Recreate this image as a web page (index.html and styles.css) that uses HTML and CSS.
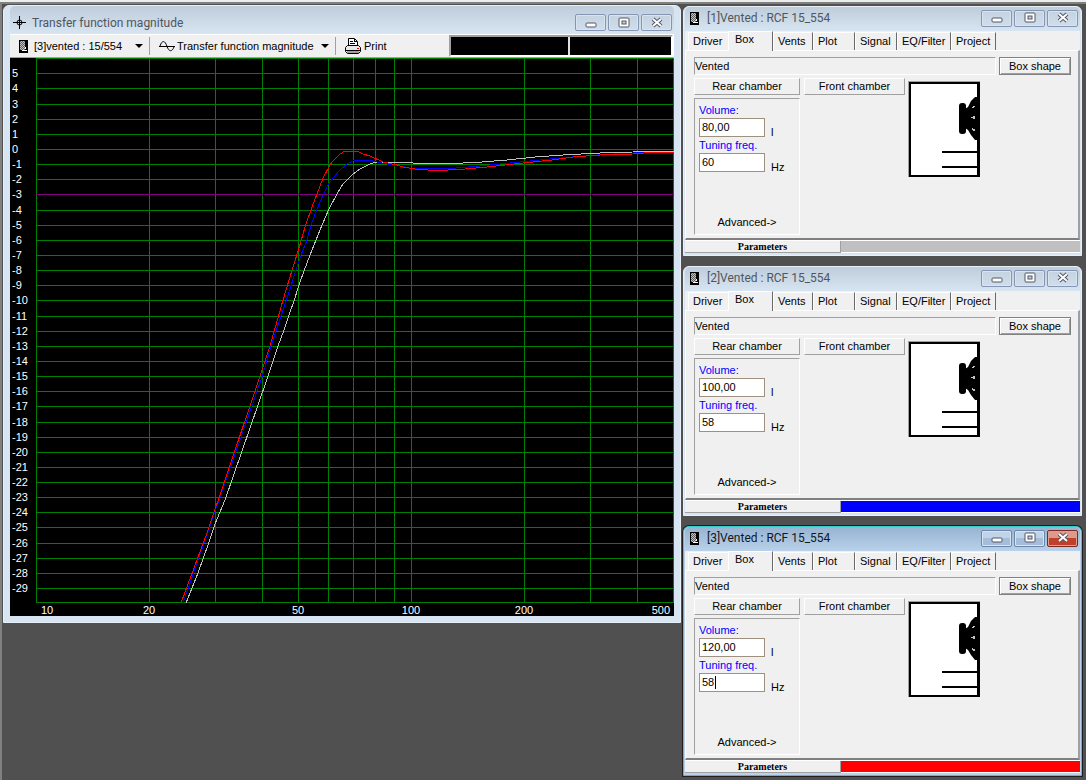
FILE: index.html
```
<!DOCTYPE html>
<html lang="en">
<head>
  <meta charset="UTF-8">
  <title>Transfer function magnitude</title>
  <link rel="stylesheet" href="styles.css">
</head>
<body>

  <!-- Shared icons -->
  <svg class="defs" width="0" height="0">
    <defs>
      <pattern id="dither" width="2" height="2" patternUnits="userSpaceOnUse">
        <rect width="2" height="2" fill="#c0c0c0"/>
        <rect width="1" height="1" fill="#606060"/>
        <rect x="1" y="1" width="1" height="1" fill="#606060"/>
      </pattern>
      <symbol id="icon-box" viewBox="0 0 9 13">
        <rect width="9" height="13" fill="#000"/>
        <rect x="1" y="1" width="5" height="9" fill="url(#dither)"/>
        <path d="M6 7h1v2h-1zM3 10h5v1h-5z" fill="#fff"/>
      </symbol>
      <symbol id="icon-min" viewBox="0 0 12 12">
        <rect x="1" y="6" width="10" height="4" rx="1" fill="#fff" stroke="#535666"/>
      </symbol>
      <symbol id="icon-max" viewBox="0 0 12 12">
        <rect x="1" y="1" width="10" height="9" rx="1" fill="#fff" stroke="#535666"/>
        <rect x="4" y="4" width="4" height="3" fill="#c3d0de" stroke="#535666"/>
      </symbol>
      <symbol id="icon-close" viewBox="0 0 12 12">
        <path d="M2 2L10 9M10 2L2 9" stroke="#535666" stroke-width="4"/>
        <path d="M2 2L10 9M10 2L2 9" stroke="#fff" stroke-width="2"/>
      </symbol>
      <symbol id="box-drawing" viewBox="0 0 72 96">
        <rect width="72" height="96" fill="#a0a0a0"/>
        <rect x="1" y="1" width="71" height="95" fill="#000"/>
        <rect x="3" y="3" width="66" height="91" fill="#fff"/>
        <path d="M34 70h36v2h-36zM34 85h36v2h-36z"/>
        <rect x="51" y="22" width="7" height="31" rx="3"/>
        <path d="M57 28L60 26L63 20L67 16H70V59H67L63 54L60 49L57 47z"/>
        <path d="M65 25h2v1h-1v1h-2v-1h1zM63 36h2v-1h2v3h-2v-1h-2zM64 47h1v1h2v2h-2v-1h-1z" fill="#c0c0c0"/>
      </symbol>
    </defs>
  </svg>

  <div class="app-edge"></div>

  <main class="desktop">

    <!-- Graph window -->
    <section class="window graph-window">
      <header class="titlebar">
        <svg class="title-icon" width="13" height="13" viewBox="0 0 13 13">
          <path d="M6 0h1v13h-1zM0 6h13v1H0z"/>
          <circle cx="6.5" cy="6.5" r="2.5" fill="none" stroke="#000"/>
        </svg>
        <h1>Transfer function magnitude</h1>
        <div class="win-buttons">
          <button aria-label="Minimize"><svg width="12" height="12"><use href="#icon-min"/></svg></button>
          <button aria-label="Maximize"><svg width="12" height="12"><use href="#icon-max"/></svg></button>
          <button aria-label="Close"><svg width="12" height="12"><use href="#icon-close"/></svg></button>
        </div>
      </header>

      <div class="toolbar">
        <label class="drop drop-project">
          <svg width="9" height="13"><use href="#icon-box"/></svg>
          <select aria-label="Project"><option>[3]vented : 15/554</option></select>
          <i class="arrow"></i>
        </label>
        <label class="drop drop-plot">
          <svg width="17" height="13" viewBox="0 0 17 13">
            <path d="M0 6.5H16M1 6C3 0 6 0 8 6.5C10 12 13 12 15 7" fill="none" stroke="#000"/>
          </svg>
          <select aria-label="Plot type"><option>Transfer function magnitude</option></select>
          <i class="arrow"></i>
        </label>
        <button class="print">
          <svg width="16" height="16" viewBox="0 0 16 16">
            <path d="M3.5 8.5V.5H9.500L12.500 3.500V8.500z" fill="#fff" stroke="#000"/>
            <path d="M5 3h3v1H5zM5 5h5v1H5zM9 1h1v2h2v1H9z"/>
            <path d="M.5 9.500L2.500 7.500H13.500L15.500 9.500V13.500L13.500 15.500H2.500L.5 13.500z" fill="#e8e8e8" stroke="#000"/>
            <path d="M1 12.500H15" stroke="#000"/>
            <path d="M2 13h12v2H2z" fill="#a0a0a0"/>
            <rect x="12" y="10" width="2" height="1" fill="red"/>
          </svg>
          Print
        </button>
        <div class="readout"><span></span><span></span></div>
      </div>

      <svg class="chart" viewBox="10 58 664 558">
        <g id="grid"></g>
        <g class="curves">
          <polyline class="c1" points="186,603 192,588 198,573 203,559 209,542 215,524 220,512 225,500 267,379 273,361 278,346 284,330 289,315 294,301 299,285 304,271 310,255 316,240 322,225 329,209 337,194 343,184 352,175 360,169 370,164 376,162 410,162 413,163 463,163 482,162 507,160 535,157 563,155 600,153 633,152 656,151 674,151"/>
          <polyline class="c2" points="183,603 214,514 262,377 267,360 272,343 282,313 287,298 297,267 301,255 307,240 311,225 317,209 324,193 328,185 334,177 340,170 347,164 353,161 357,160 368,160 377,162 387,164 400,166 410,168 456,168 480,166 500,164 520,162 550,159 583,156 613,154 655,152 674,152"/>
          <polyline class="c3" points="181,603 207,533 214,512 219,498 259,379 270,346 283,300 293,267 299,248 305,227 312,207 317,194 323,178 330,165 333,161 340,154 345,151 357,151 363,154 370,156 383,162 397,165 403,167 415,169 428,170 448,170 465,169 487,167 505,165 523,163 552,160 573,157 600,155 633,154 655,152 674,152"/>
        </g>
      </svg>
    </section>

    <!-- Project windows -->
    <div class="projects">

      <section class="window project">
        <header class="titlebar">
          <svg class="title-icon" width="9" height="13"><use href="#icon-box"/></svg>
          <h2>[1]Vented : RCF 15_554</h2>
          <div class="win-buttons">
            <button aria-label="Minimize"><svg width="12" height="12"><use href="#icon-min"/></svg></button>
            <button aria-label="Maximize"><svg width="12" height="12"><use href="#icon-max"/></svg></button>
            <button aria-label="Close"><svg width="12" height="12"><use href="#icon-close"/></svg></button>
          </div>
        </header>
        <nav class="tabs">
          <button>Driver</button>
          <button class="active">Box</button>
          <button>Vents</button>
          <button>Plot</button>
          <button>Signal</button>
          <button>EQ/Filter</button>
          <button>Project</button>
        </nav>
        <div class="panel">
          <div class="type-row">
            <div class="box-type">Vented</div>
            <button class="shape">Box shape</button>
          </div>
          <div class="box-row">
            <div class="chambers">
              <button class="rear">Rear chamber</button>
              <button class="front">Front chamber</button>
              <div class="values">
                <label for="vol1">Volume:</label>
                <div class="value"><input id="vol1" type="text" value="80,00"><span>l</span></div>
                <label for="freq1">Tuning freq.</label>
                <div class="value"><input id="freq1" type="text" value="60"><span>Hz</span></div>
                <button class="advanced">Advanced-&gt;</button>
              </div>
            </div>
            <svg class="drawing" width="72" height="96"><use href="#box-drawing"/></svg>
          </div>
        </div>
        <footer class="status"><button>Parameters</button><div class="color grey"></div></footer>
      </section>

      <section class="window project">
        <header class="titlebar">
          <svg class="title-icon" width="9" height="13"><use href="#icon-box"/></svg>
          <h2>[2]Vented : RCF 15_554</h2>
          <div class="win-buttons">
            <button aria-label="Minimize"><svg width="12" height="12"><use href="#icon-min"/></svg></button>
            <button aria-label="Maximize"><svg width="12" height="12"><use href="#icon-max"/></svg></button>
            <button aria-label="Close"><svg width="12" height="12"><use href="#icon-close"/></svg></button>
          </div>
        </header>
        <nav class="tabs">
          <button>Driver</button>
          <button class="active">Box</button>
          <button>Vents</button>
          <button>Plot</button>
          <button>Signal</button>
          <button>EQ/Filter</button>
          <button>Project</button>
        </nav>
        <div class="panel">
          <div class="type-row">
            <div class="box-type">Vented</div>
            <button class="shape">Box shape</button>
          </div>
          <div class="box-row">
            <div class="chambers">
              <button class="rear">Rear chamber</button>
              <button class="front">Front chamber</button>
              <div class="values">
                <label for="vol2">Volume:</label>
                <div class="value"><input id="vol2" type="text" value="100,00"><span>l</span></div>
                <label for="freq2">Tuning freq.</label>
                <div class="value"><input id="freq2" type="text" value="58"><span>Hz</span></div>
                <button class="advanced">Advanced-&gt;</button>
              </div>
            </div>
            <svg class="drawing" width="72" height="96"><use href="#box-drawing"/></svg>
          </div>
        </div>
        <footer class="status"><button>Parameters</button><div class="color blue"></div></footer>
      </section>

      <section class="window project focused">
        <header class="titlebar">
          <svg class="title-icon" width="9" height="13"><use href="#icon-box"/></svg>
          <h2>[3]Vented : RCF 15_554</h2>
          <div class="win-buttons">
            <button aria-label="Minimize"><svg width="12" height="12"><use href="#icon-min"/></svg></button>
            <button aria-label="Maximize"><svg width="12" height="12"><use href="#icon-max"/></svg></button>
            <button class="close" aria-label="Close"><svg width="12" height="12"><use href="#icon-close"/></svg></button>
          </div>
        </header>
        <nav class="tabs">
          <button>Driver</button>
          <button class="active">Box</button>
          <button>Vents</button>
          <button>Plot</button>
          <button>Signal</button>
          <button>EQ/Filter</button>
          <button>Project</button>
        </nav>
        <div class="panel">
          <div class="type-row">
            <div class="box-type">Vented</div>
            <button class="shape">Box shape</button>
          </div>
          <div class="box-row">
            <div class="chambers">
              <button class="rear">Rear chamber</button>
              <button class="front">Front chamber</button>
              <div class="values">
                <label for="vol3">Volume:</label>
                <div class="value"><input id="vol3" type="text" value="120,00"><span>l</span></div>
                <label for="freq3">Tuning freq.</label>
                <div class="value"><input id="freq3" type="text" value="58"><i class="caret"></i><span>Hz</span></div>
                <button class="advanced">Advanced-&gt;</button>
              </div>
            </div>
            <svg class="drawing" width="72" height="96"><use href="#box-drawing"/></svg>
          </div>
        </div>
        <footer class="status"><button>Parameters</button><div class="color red"></div></footer>
      </section>

    </div>
  </main>

  <script>
    // log frequency scale, 375 units per decade
    function fx(hz) {
      return 36 + Math.round(375 * Math.log10(hz / 10));
    }
    function fy(db) {
      return 149 - Math.round(15.14 * db);
    }

    let out = '';
    [10, 20, 30, 40, 50, 60, 70, 80, 90, 100, 200, 300, 400, 500].forEach(hz => {
      out += `<rect x="${fx(hz)}" y="58" width="1" height="545"/>`;
    });
    for (let db = 6; db >= -30; db--) {
      const cls = db === 0 ? 'zero' : db === -3 ? 'cutoff' : '';
      const y = db === -30 ? 602 : fy(db);
      out += `<rect class="${cls}" x="36" y="${y}" width="638" height="1"/>`;
      if (db < 6 && db > -30) {
        out += `<text x="12" y="${y + 4}">${db}</text>`;
      }
    }
    [20, 50, 100, 200].forEach(hz => {
      out += `<text class="hz" x="${fx(hz)}" y="614">${hz}</text>`;
    });
    out += '<text x="41" y="614">10</text><text class="last" x="670" y="614">500</text>';
    document.getElementById('grid').innerHTML = out;
  </script>
</body>
</html>
```
FILE: styles.css
```
* {
  box-sizing: border-box;
}
body {
  margin: 0;
  background: #505050;
  font-family: "Liberation Sans", Arial, sans-serif;
  font-size: 11px;
  line-height: 13px;
  color: #000;
}
button, input, select {
  font: inherit;
  color: inherit;
  padding: 0;
  margin: 0;
  border-radius: 0;
}
button {
  background: #f0f0f0;
  border: none;
  white-space: nowrap;
}
svg {
  display: block;
  flex: none;
}
.defs {
  position: absolute;
}
.app-edge {
  height: 4px;
  background: #eceeee;
  border-bottom: 2px solid #808080;
}
.desktop {
  display: grid;
  grid-template-columns: minmax(0, 1fr) 399px;
  gap: 2px;
  align-items: start;
  padding: 1px 4px 4px 1px;
  border-left: 2px solid #808080;
  min-height: calc(100vh - 4px);
}

/* Windows */
.window {
  background: #d7e4f2;
  border: 1px solid #e9eff7;
  border-radius: 6px 6px 0 0;
}
.titlebar {
  display: flex;
  align-items: center;
  background: linear-gradient(#bfcddb, #d7e4f2);
  border-radius: 5px 5px 0 0;
}
.titlebar h1, .titlebar h2 {
  flex: 1;
  margin: 0;
  font-family: Roboto, "Noto Sans", sans-serif;
  font-size: 12px;
  line-height: 16px;
  font-weight: normal;
  color: #50565e;
}
.win-buttons {
  display: flex;
  gap: 2px;
}
.win-buttons button {
  display: flex;
  align-items: center;
  justify-content: center;
  width: 31px;
  height: 17px;
  border: 1px solid #8496b3;
  border-radius: 2px;
  background: linear-gradient(#c5d2e0, #d0deec);
  box-shadow: inset 0 0 0 1px #d8e4f0;
}

/* Graph window */
.graph-window {
  padding: 0 6px 6px;
}
.graph-window .titlebar {
  height: 28px;
  padding: 5px 2px 0 3px;
}
.graph-window .title-icon {
  margin-right: 6px;
}
.toolbar {
  display: flex;
  align-items: center;
  height: 24px;
  background: #f0f0f0;
  border-top: 1px solid #fff;
  border-right: 1px solid #fff;
  border-bottom: 1px solid #a0a0a0;
}
.drop {
  display: flex;
  align-items: center;
  height: 18px;
  border-right: 1px solid #a0a0a0;
}
.drop select {
  flex: 1;
  min-width: 0;
  appearance: none;
  background: none;
  border: none;
}
.drop-project {
  width: 140px;
  padding: 0 6px 0 9px;
}
.drop-project select {
  margin-left: 6px;
}
.drop-plot {
  width: 186px;
  padding: 0 6px 0 9px;
}
.drop-plot select {
  margin-left: 1px;
}
.arrow {
  border: 4px solid transparent;
  border-top-color: #000;
  border-bottom: none;
}
.print {
  display: flex;
  align-items: center;
  gap: 3px;
  margin-left: 9px;
}
.readout {
  display: flex;
  gap: 2px;
  width: 224px;
  height: 22px;
  margin-left: auto;
  background: #e0e0e0;
  border: 2px solid #a0a0a0;
  border-right-color: #fff;
  border-bottom-color: #fff;
}
.readout span {
  background: #000;
  flex: 7;
}
.readout span + span {
  flex: 6;
}

/* Chart */
.chart {
  width: 100%;
  height: auto;
  background: #000;
  font-size: 11px;
  shape-rendering: crispEdges;
}
.chart rect {
  fill: #008000;
}
.chart .zero {
  fill: #f00;
}
.chart .cutoff {
  fill: #800080;
}
.chart text {
  fill: #fff;
}
.chart .hz {
  text-anchor: middle;
}
.chart .last {
  text-anchor: end;
}
.curves polyline {
  fill: none;
  stroke-width: 1px;
}
.c1 {
  stroke: #c0c0c0;
}
.c2 {
  stroke: #00f;
}
.c3 {
  stroke: #f00;
}

/* Project windows */
.projects {
  display: flex;
  flex-direction: column;
  gap: 10px;
  padding-top: 1px;
}
.project {
  padding: 0 1px 2px;
}
.project .titlebar {
  height: 24px;
  padding: 0 2px 2px 5px;
}
.project .title-icon {
  margin-right: 8px;
}
.focused {
  background: #b9d1ea;
  border-color: #3cc;
  box-shadow: 0 0 0 1px #202020;
}
.focused .titlebar {
  background: linear-gradient(#97b3d1, #b9d1ea);
}
.focused h2 {
  color: #101820;
}
.focused .win-buttons button {
  border-color: #6b87ab;
  background: linear-gradient(#c0d3e8 50%, #a4bdd8 50%);
}
.focused .win-buttons .close {
  border-color: #7a2a22;
  background: linear-gradient(#dc9a8c 50%, #c0402a 50%);
  box-shadow: inset 0 0 0 1px #e0a090;
}

.tabs {
  display: grid;
  grid-template-columns: 40px 45px 40px 42px 42px 54px 45px;
  align-items: end;
  height: 19px;
  padding-left: 3px;
  background: #f0f0f0;
}
.tabs button {
  height: 18px;
  padding: 0 0 1px 4px;
  text-align: left;
  border-top: 1px solid #fff;
  border-left: 1px solid #fff;
  border-right: 1px solid #696969;
}
.tabs button:first-child {
  border-right: none;
}
.tabs .active {
  height: 20px;
  padding: 0 0 4px 6px;
  margin-bottom: -1px;
}

.panel {
  background: #f0f0f0;
  border-top: 1px solid #fff;
  border-left: 1px solid #fff;
  border-right: 2px solid #a0a0a0;
  border-bottom: 2px solid #808080;
  padding: 6px 7px 3px 8px;
}
.type-row {
  display: flex;
  gap: 3px;
  height: 18px;
}
.box-type, .values {
  border: 1px solid #fff;
  border-top-color: #a0a0a0;
  border-left-color: #a0a0a0;
}
.box-type {
  flex: 1;
  line-height: 16px;
}
.shape {
  width: 72px;
  border: 1px solid #808080;
  box-shadow: inset 1px 1px #fff, inset -1px -1px #a0a0a0;
}
.box-row {
  display: flex;
  gap: 3px;
  padding-top: 3px;
}
.chambers {
  display: grid;
  grid-template-columns: 106px 101px;
  grid-template-rows: 17px 137px;
  gap: 3px 4px;
}
.rear, .front {
  border: 1px solid #fff;
  border-right-color: #a0a0a0;
  border-bottom-color: #a0a0a0;
}
.values {
  display: flex;
  flex-direction: column;
  padding: 4px 4px 5px;
}
.values label {
  color: #00f;
  line-height: 15px;
}
.value {
  position: relative;
  display: flex;
  gap: 6px;
  height: 19px;
  margin-bottom: 1px;
}
.value input {
  width: 66px;
  padding: 0 2px;
  background: #fff;
  border: 1px solid #a09080;
}
.value span {
  padding-top: 8px;
}
.caret {
  position: absolute;
  left: 16px;
  top: 3px;
  width: 1px;
  height: 13px;
  background: #000;
}
.advanced {
  margin: auto auto 0;
}
.drawing {
  margin-top: 3px;
}

.status {
  display: grid;
  grid-template-columns: 156px 1fr;
  height: 13px;
  border-top: 1px solid #fff;
}
.status button {
  border-right: 1px solid #a0a0a0;
  border-bottom: 1px solid #a0a0a0;
  font: bold 10px/11px "Liberation Serif", serif;
}
.color {
  border-bottom: 1px solid #fff;
}
.grey {
  background: #c0c0c0;
}
.blue {
  background: #00f;
}
.red {
  background: #f00;
}
```
